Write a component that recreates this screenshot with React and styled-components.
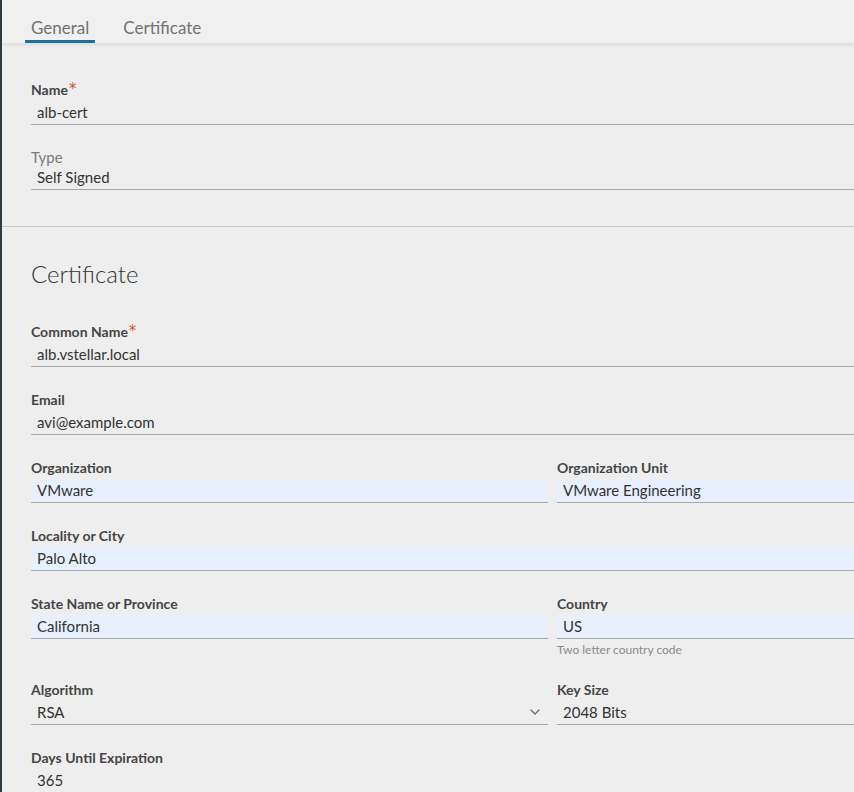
import React from "react";
import styled, { createGlobalStyle } from "styled-components";

const GlobalStyle = createGlobalStyle`
  html, body {
    margin: 0;
    padding: 0;
    background: #eeeeee;
    overflow: hidden;
  }
  body {
    font-family: Lato, "Open Sans", sans-serif;
    color: #333333;
  }
`;

const ChevronDown = () => (
  <svg width="10" height="6" viewBox="0 0 10 6" fill="none">
    <path d="M1 1l4 4 4-4" stroke="#666" strokeWidth="1.2" strokeLinecap="round" strokeLinejoin="round" />
  </svg>
);

const Field = ({ label, value, required, full, autofill, hint, select, light }) => (
  <StField full={full}>
    <StLabel light={light}>
      {label}
      {required && <StStar>*</StStar>}
    </StLabel>
    <StInput autofill={autofill}>
      <span>{value}</span>
      {select && <ChevronDown />}
    </StInput>
    {hint && <StHint>{hint}</StHint>}
  </StField>
);

const App = () => {
  return (
    <StPage>
      <GlobalStyle />
      <StEdge />
      <StMain>
        <StHeader>
          <StTab active>General</StTab>
          <StTab>Certificate</StTab>
        </StHeader>

        <StSection>
          <StGrid>
            <Field full label="Name" value="alb-cert" required />
            <Field full light label="Type" value="Self Signed" />
          </StGrid>
        </StSection>

        <StDivider />

        <StSection top>
          <StHeading>Certificate</StHeading>
          <StGrid>
            <Field full label="Common Name" value="alb.vstellar.local" required />
            <Field full label="Email" value="avi@example.com" />
            <Field label="Organization" value="VMware" autofill />
            <Field label="Organization Unit" value="VMware Engineering" autofill />
            <Field full label="Locality or City" value="Palo Alto" autofill />
            <Field label="State Name or Province" value="California" autofill />
            <Field label="Country" value="US" autofill hint="Two letter country code" />
            <Field label="Algorithm" value="RSA" select />
            <Field label="Key Size" value="2048 Bits" />
            <Field full label="Days Until Expiration" value="365" />
          </StGrid>
        </StSection>
      </StMain>
    </StPage>
  );
};

export default App;

const StPage = styled.div`
  display: flex;
  height: 792px;
`;

const StEdge = styled.div`
  width: 2px;
  flex-shrink: 0;
  background: #2e3b43;
`;

const StMain = styled.div`
  flex: 1;
  min-width: 0;
`;

const StHeader = styled.div`
  height: 43px;
  box-sizing: border-box;
  padding-left: 23px;
  display: flex;
  gap: 22px;
  background: #f0f0f0;
  box-shadow: 0 2px 3px rgba(0, 0, 0, 0.08);
  position: relative;
`;

const StTab = styled.div`
  height: 43px;
  box-sizing: border-box;
  padding: 18px 6px 0 6px;
  line-height: 20px;
  font-size: 17px;
  font-weight: 400;
  color: #737373;
  border-bottom: 3px solid ${(p) => (p.active ? "#1f6f96" : "transparent")};
`;

const StSection = styled.div`
  padding: ${(p) => (p.top ? "33px" : "38px")} 0 12px 29px;
`;

const StDivider = styled.div`
  height: 1px;
  background: #c8c8c8;
`;

const StHeading = styled.div`
  font-size: 24px;
  line-height: 28px;
  font-weight: 300;
  color: #333333;
  margin-bottom: 35px;
`;

const StGrid = styled.div`
  display: grid;
  grid-template-columns: 517px 1fr;
  column-gap: 9px;
  align-items: start;
`;

const StField = styled.div`
  grid-column: ${(p) => (p.full ? "1 / -1" : "auto")};
  margin-bottom: 24px;
`;

const StLabel = styled.div`
  font-size: ${(p) => (p.light ? "15px" : "14px")};
  font-weight: ${(p) => (p.light ? 400 : 700)};
  color: ${(p) => (p.light ? "#7a7a7a" : "#454545")};
  line-height: ${(p) => (p.light ? "16px" : "18px")};
  margin-bottom: ${(p) => (p.light ? "1px" : "2px")};
`;

const StStar = styled.span`
  font-family: "DejaVu Sans", sans-serif;
  color: #d9532f;
  font-size: 15px;
  font-weight: 400;
  line-height: 0;
  position: relative;
  top: -1px;
  margin-left: 1px;
`;

const StInput = styled.div`
  height: 24px;
  box-sizing: border-box;
  padding: 0 8px 1px 6px;
  display: flex;
  align-items: center;
  justify-content: space-between;
  font-size: 15px;
  color: #333333;
  background: ${(p) => (p.autofill ? "#e8f0fe" : "transparent")};
  border-bottom: 1px solid #a8a8a8;
`;

const StHint = styled.div`
  margin-top: 4px;
  font-size: 12px;
  line-height: 14px;
  color: #8a8a8a;
`;
